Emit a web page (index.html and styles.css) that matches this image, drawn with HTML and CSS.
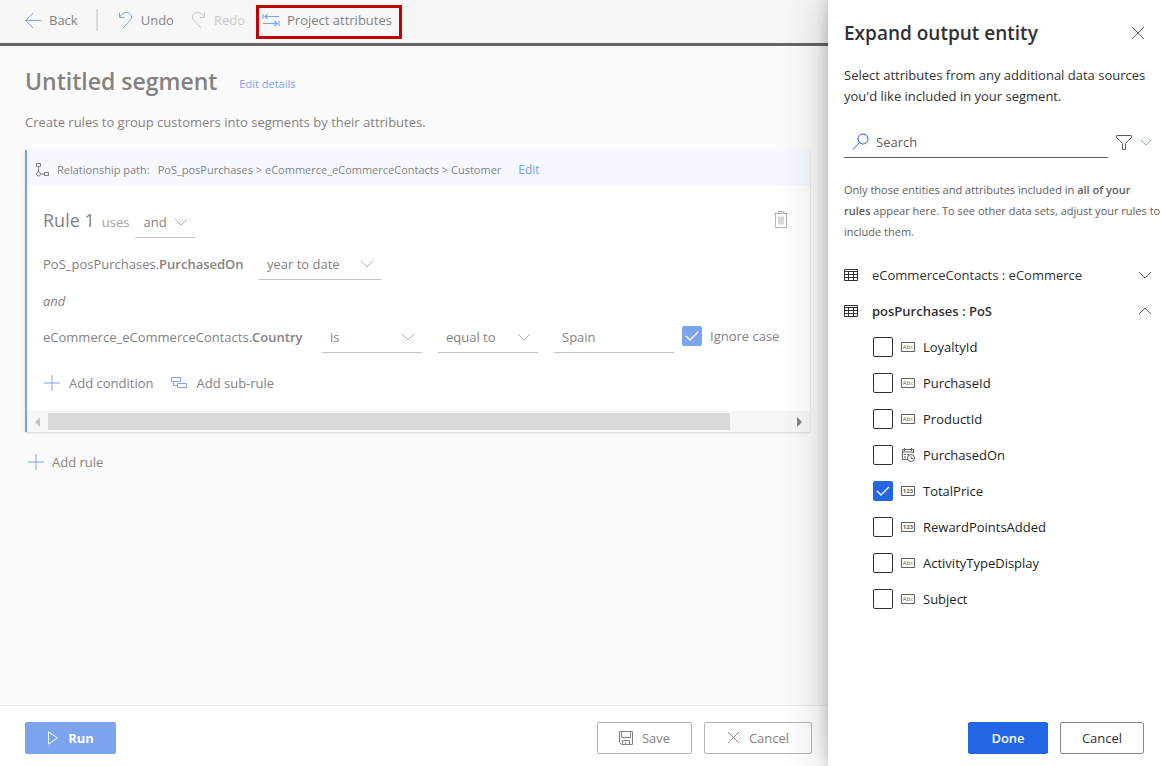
FILE: index.html
```html
<!DOCTYPE html>
<html lang="en">
<head>
<meta charset="utf-8">
<title>Untitled segment</title>
<link rel="stylesheet" href="styles.css">
</head>
<body>
<svg class="defs" aria-hidden="true">
  <symbol id="down" viewBox="0 0 14 8"><path d="M1 1l6 6 6-6"/></symbol>
  <symbol id="plus" viewBox="0 0 16 16"><path d="M8 0v16M0 8h16"/></symbol>
  <symbol id="close" viewBox="0 0 14 14"><path d="M1 1l12 12M13 1L1 13"/></symbol>
  <symbol id="check" viewBox="0 0 20 20"><path d="M4 10l4 4 8-8"/></symbol>
  <symbol id="table" viewBox="0 0 14 12"><path d="M.5.5h13v11H.5zM.5 2.5h13M.5 5.5h13M.5 8.5h13M4.500 2.500v9M9.500 2.500v9"/></symbol>
  <symbol id="date" viewBox="0 0 14 14"><path d="M7 11.500H1.500v-10h11v4M1.500 4h11M3.500 0v3M10.500 0v3M3 6.500h2M6 6.500h2M3 9h2M10 8.500v2h2"/><circle cx="10" cy="10" r="3.500"/></symbol>
</svg>
<div class="app">
  <main class="main">
    <nav class="toolbar">
      <button class="tool"><svg class="blue" width="17" height="16" viewBox="0 0 17 16"><path d="M16.500 8.500H1M8 1L.8 8.500 8 16"/></svg>Back</button>
      <span class="divider"></span>
      <button class="tool undo"><svg class="blue" width="16" height="18" viewBox="0 0 16 18"><path d="M1.500 1.500v5h5M1.500 6C4 3 6 1.500 8.500 1.500c5 0 6.500 5 3.500 8L5 17"/></svg>Undo</button>
      <button class="tool redo" disabled><svg width="16" height="18" viewBox="0 0 16 18"><path d="M13.500 1.500v5h-5M13.500 6C11 3 9 1.500 6.500 1.500c-5 0-6.500 5-3.500 8L10 17"/></svg>Redo</button>
      <button class="tool project"><svg class="blue strong" width="18" height="14" viewBox="0 0 18 14"><path d="M1 1v5M17 8v5M3 3.500h14M1 10.500h14M5.500 1L3 3.500 5.500 6M12.500 8l2.500 2.500-2.500 2.500"/></svg>Project attributes</button>
    </nav>
    <div class="content">
      <header class="heading"><h1>Untitled segment</h1><a href="#">Edit details</a></header>
      <p class="intro">Create rules to group customers into segments by their attributes.</p>
      <section class="card">
        <div class="path">
          <svg width="14" height="14" viewBox="0 0 14 14"><path d="M1.500.5h4v3h-4zM3.500 4v5M9.500 9.500h4v3h-4zM5.500 11h4"/><circle cx="3.500" cy="11" r="2"/></svg>
          <span class="path-label">Relationship path:</span>
          <span class="path-value">PoS_posPurchases &gt; eCommerce_eCommerceContacts &gt; Customer</span>
          <a href="#">Edit</a>
        </div>
        <div class="rule">
          <div class="rule-head">
            <h2>Rule 1</h2><span class="uses">uses</span>
            <span class="field w60"><select aria-label="Rule operator"><option>and</option></select><svg width="14" height="8"><use href="#down"/></svg></span>
            <button class="trash" aria-label="Delete rule"><svg width="14" height="17" viewBox="0 0 14 17"><path d="M0 2.500h14M4.500 2V.5h5V2M1.500 3v13.500h11V3M5 5.500v8M7 5.500v8M9 5.500v8"/></svg></button>
          </div>
          <div class="condition">
            <span class="name w200">PoS_posPurchases.<b>PurchasedOn</b></span>
            <span class="field w122"><select aria-label="PurchasedOn range"><option>year to date</option></select><svg width="14" height="8"><use href="#down"/></svg></span>
          </div>
          <div class="joiner">and</div>
          <div class="condition">
            <span class="name w263">eCommerce_eCommerceContacts.<b>Country</b></span>
            <span class="field w100"><select aria-label="Country test"><option>is</option></select><svg width="14" height="8"><use href="#down"/></svg></span>
            <span class="field w100"><select aria-label="Country comparison"><option>equal to</option></select><svg width="14" height="8"><use href="#down"/></svg></span>
            <span class="field w120"><input type="text" aria-label="Country value" value="Spain"></span>
            <label class="ignore"><span class="box"><input type="checkbox" checked><svg width="20" height="20"><use href="#check"/></svg></span>Ignore case</label>
          </div>
          <div class="actions">
            <button class="tool"><svg class="blue" width="16" height="16"><use href="#plus"/></svg>Add condition</button>
            <button class="tool"><svg class="blue" width="16" height="12" viewBox="0 0 16 12"><path d="M.5.5h9v4h-9zM6.500 6.500h9v4h-9zM2.500 4.500v4h4"/></svg>Add sub-rule</button>
          </div>
        </div>
        <div class="scroll">
          <svg class="arrow dim" width="5" height="10" viewBox="0 0 5 10"><path d="M5 0v10L0 5z"/></svg>
          <div class="track"><div class="thumb"></div></div>
          <svg class="arrow" width="5" height="10" viewBox="0 0 5 10"><path d="M0 0v10l5-5z"/></svg>
        </div>
      </section>
      <button class="tool add-rule"><svg class="blue" width="16" height="16"><use href="#plus"/></svg>Add rule</button>
    </div>
    <footer class="footer">
      <button class="btn run"><svg width="12" height="14" viewBox="0 0 12 14"><path d="M1.500 1v12L10.500 7z"/></svg>Run</button>
      <button class="btn save"><svg width="14" height="14" viewBox="0 0 14 14"><path d="M.5.5h13v13h-11l-2-2zM2.500.5v6h9v-6M3.500 13.500v-4h7v4M6.500 13.500v-2"/></svg>Save</button>
      <button class="btn cancel"><svg width="13" height="13"><use href="#close"/></svg>Cancel</button>
    </footer>
  </main>
  <aside class="panel">
    <header class="panel-head"><h2>Expand output entity</h2><button class="x" aria-label="Close"><svg width="14" height="14"><use href="#close"/></svg></button></header>
    <p class="lead">Select attributes from any additional data sources<br>you'd like included in your segment.</p>
    <div class="search-row">
      <label class="search"><svg width="18" height="18" viewBox="0 0 18 18"><circle cx="11" cy="6" r="5"/><path d="M7.500 9.500L1 16.500"/></svg><input type="text" placeholder="Search" aria-label="Search"></label>
      <button class="filter" aria-label="Filter"><svg width="16" height="15" viewBox="0 0 16 15"><path d="M.5.5h15v2l-6 6v6h-3v-6l-6-6z"/></svg><svg class="teal" width="12" height="7"><use href="#down"/></svg></button>
    </div>
    <p class="note">Only those entities and attributes included in <b>all of your</b><br><b>rules</b> appear here. To see other data sets, adjust your rules to<br>include them.</p>
    <button class="entity"><svg width="14" height="12"><use href="#table"/></svg><span>eCommerceContacts : eCommerce</span><svg class="chev" width="14" height="8"><use href="#down"/></svg></button>
    <button class="entity open"><svg width="14" height="12"><use href="#table"/></svg><span>posPurchases : PoS</span><svg class="chev up" width="14" height="8"><use href="#down"/></svg></button>
    <div class="attributes">
      <label><span class="box"><input type="checkbox"></span><svg class="type" width="14" height="10" viewBox="0 0 14 10"><path d="M.5.5h13v9H.5z"/><text x="7" y="7" text-anchor="middle">Abc</text></svg>LoyaltyId</label>
      <label><span class="box"><input type="checkbox"></span><svg class="type" width="14" height="10" viewBox="0 0 14 10"><path d="M.5.5h13v9H.5z"/><text x="7" y="7" text-anchor="middle">Abc</text></svg>PurchaseId</label>
      <label><span class="box"><input type="checkbox"></span><svg class="type" width="14" height="10" viewBox="0 0 14 10"><path d="M.5.5h13v9H.5z"/><text x="7" y="7" text-anchor="middle">Abc</text></svg>ProductId</label>
      <label><span class="box"><input type="checkbox"></span><svg class="type" width="14" height="14"><use href="#date"/></svg>PurchasedOn</label>
      <label><span class="box"><input type="checkbox" checked><svg width="20" height="20"><use href="#check"/></svg></span><svg class="type" width="14" height="10" viewBox="0 0 14 10"><path d="M.5.5h13v9H.5z"/><text class="bold" x="7" y="7" text-anchor="middle">123</text></svg>TotalPrice</label>
      <label><span class="box"><input type="checkbox"></span><svg class="type" width="14" height="10" viewBox="0 0 14 10"><path d="M.5.5h13v9H.5z"/><text class="bold" x="7" y="7" text-anchor="middle">123</text></svg>RewardPointsAdded</label>
      <label><span class="box"><input type="checkbox"></span><svg class="type" width="14" height="10" viewBox="0 0 14 10"><path d="M.5.5h13v9H.5z"/><text x="7" y="7" text-anchor="middle">Abc</text></svg>ActivityTypeDisplay</label>
      <label><span class="box"><input type="checkbox"></span><svg class="type" width="14" height="10" viewBox="0 0 14 10"><path d="M.5.5h13v9H.5z"/><text x="7" y="7" text-anchor="middle">Abc</text></svg>Subject</label>
    </div>
    <footer class="panel-foot"><button class="btn done">Done</button><button class="btn plain">Cancel</button></footer>
  </aside>
</div>
</body>
</html>
```

FILE: styles.css
```css
* { box-sizing: border-box; }
body, h1, h2, p { margin: 0; }
body {
  font: 13px/20px "Open Sans", "Noto Sans", sans-serif;
  color: #848280;
  background: #fff;
}
.defs { position: absolute; width: 0; height: 0; }
svg { fill: none; stroke: currentColor; flex: none; }
b { font-weight: 600; }
a { color: #7c9ff0; font-size: 12px; text-decoration: none; }
button, input, select { font: inherit; color: inherit; }
button { border: 0; padding: 0; background: none; white-space: nowrap; }
.blue { color: #7ba2ec; }
.strong { stroke-width: 1.2; }

.app {
  display: grid;
  grid-template-columns: minmax(0, 1fr) 333px;
  min-height: 100vh;
  overflow: hidden;
}
.main { display: flex; flex-direction: column; background: #fbfbfb; }

.toolbar {
  display: flex;
  align-items: center;
  height: 46px;
  padding: 0 25px 3px;
  background: #f7f7f7;
  border-bottom: 3px solid #666;
}
.tool { display: flex; align-items: center; gap: 8px; }
.toolbar .tool { gap: 7px; }
.divider { width: 2px; height: 22px; margin: 0 20px 0 18px; background: #dcdad8; }
.redo { margin: 0 11px 0 17px; color: #c9c8c6; }
.toolbar .redo { color: #c9c8c6; }
.project { height: 34px; margin-top: 4px; padding: 0 7px 4px 3px; border: 3px solid #c40006; }

.content { flex: 1; padding: 20px 18px 20px 25px; }
.heading { display: flex; align-items: center; gap: 22px; height: 30px; }
h1 { font-size: 23px; line-height: 30px; font-weight: 600; white-space: nowrap; }
.heading a { padding-top: 6px; font-size: 11px; }
.intro { margin: 16px 0 18px; }

.card {
  background: #fff;
  border-left: 2px solid #7ba0e6;
  box-shadow: 0 1px 2px rgba(0, 0, 0, .16);
}
.path {
  display: flex;
  align-items: center;
  height: 36px;
  padding: 3px 9px 0 8px;
  background: #f5f9ff;
  font-size: 11px;
  white-space: nowrap;
}
.path-label { margin: 0 8px; }
.path a { margin-left: 17px; font-size: 12px; }
.rule { padding: 19px 22px 18px 16px; }
.rule-head { display: flex; align-items: center; height: 34px; }
.rule-head h2 { font-size: 18px; line-height: 24px; font-weight: 400; margin-top: -4px; }
.uses { margin: 0 6px 0 7px; color: #a19f9d; }
.trash { margin-left: auto; color: #b5b3b0; }
.field { display: grid; align-items: center; height: 32px; border-bottom: 1px solid #c4c3c2; }
.field > * { grid-area: 1 / 1; }
.field select, .field input {
  appearance: none;
  width: 100%;
  height: 30px;
  padding: 0 8px;
  border: 0;
  border-radius: 0;
  outline: 0;
  background: none;
}
.field svg { justify-self: end; margin-right: 7px; pointer-events: none; color: #b0aeac; }
.w60 { width: 60px; }
.w100 { width: 100px; }
.w120 { width: 120px; }
.w122 { width: 122px; }
.w200 { width: 200px; }
.w263 { width: 263px; }
.condition { display: flex; align-items: center; gap: 16px; height: 41px; padding-top: 9px; }
.name { white-space: nowrap; }
.joiner { height: 32px; padding-top: 11px; font-style: italic; }
.ignore { display: flex; gap: 8px; margin: -2px 0 0 -8px; align-items: center; white-space: nowrap; }
.box { display: grid; width: 20px; height: 20px; color: #fff; }
.box > * { grid-area: 1 / 1; }
.box input { appearance: none; width: 20px; height: 20px; margin: 0; border: 1px solid #323130; border-radius: 2px; background: #fff; }
.box input:checked { background: #2266e3; border-color: #2266e3; }
.box svg { position: relative; pointer-events: none; stroke-width: 1.3; }
.ignore .box input:checked { background: #7ba3ee; border-color: #7ba3ee; }
.actions { display: flex; gap: 18px; height: 40px; align-items: flex-end; padding-left: 1px; }
.actions .tool { gap: 9px; }

.scroll { display: flex; align-items: center; gap: 8px; height: 21px; padding: 0 8px; background: #f7f7f7; }
.arrow { fill: #858585; stroke: none; }
.dim { fill: #c4c4c4; }
.track { flex: 1; }
.thumb { width: 92%; height: 17px; background: #d9d9d9; }
.add-rule { margin: 20px 0 0 3px; }

.footer { display: flex; align-items: center; gap: 12px; height: 61px; padding: 3px 16px 0 25px; background: #fff; border-top: 1px solid #eeedec; }
.btn { display: flex; align-items: center; justify-content: center; gap: 9px; height: 32px; border: 1px solid #b5b3b1; border-radius: 2px; font-weight: 600; }
.run { width: 91px; margin-right: auto; background: #7ba3ee; border-color: #7ba3ee; color: #fff; font-weight: 700; }
.save { width: 95px; }
.cancel { width: 108px; }
.save, .cancel { font-weight: 500; }

.panel {
  position: relative;
  display: flex;
  flex-direction: column;
  padding: 21px 17px 12px 16px;
  background: #fff;
  color: #323130;
  box-shadow: 0 0 48px rgba(0, 0, 0, .22), 0 0 14px rgba(0, 0, 0, .2);
}
.panel-head { display: flex; justify-content: space-between; align-items: center; height: 24px; }
.panel-head h2 { font-size: 19px; line-height: 24px; font-weight: 600; white-space: nowrap; }
.x { width: 14px; height: 14px; margin-right: -1px; display: grid; color: #605e5c; }
.lead { margin-top: 20px; line-height: 21px; white-space: nowrap; }
.search-row { display: flex; gap: 8px; align-items: center; margin: 19px -8px 0 0; }
.search { display: flex; flex: 1; min-width: 0; align-items: center; gap: 6px; height: 32px; padding-left: 8px; border-bottom: 1px solid #605e5c; }
.search svg { color: #2b5fd9; }
.search input { flex: 1; min-width: 0; padding: 0; border: 0; outline: 0; background: none; }
.search input::placeholder { color: #605e5c; opacity: 1; }
.filter { display: flex; align-items: center; gap: 8px; color: #605e5c; }
.teal { color: #6ba0b4; }
.note { margin: 21px -17px 15px 0; font-size: 11px; line-height: 21px; color: #605e5c; white-space: nowrap; }
.entity { display: flex; align-items: center; gap: 14px; height: 36px; margin-right: -8px; }
.entity.open { font-weight: 600; }
.chev { margin-left: auto; color: #605e5c; }
.up { transform: rotate(180deg); }
.attributes { display: grid; grid-auto-rows: 36px; padding-left: 29px; }
.attributes label { display: flex; align-items: center; gap: 8px; white-space: nowrap; color: #201f1e; }
.type { color: #605e5c; stroke-width: 1; }
.type text { font: 6px "Open Sans", sans-serif; fill: currentColor; stroke: none; }
.type .bold { font-weight: 700; }
.panel-foot { display: flex; justify-content: flex-end; gap: 12px; margin-top: auto; }
.done { width: 80px; background: #2266e3; border-color: #2266e3; color: #fff; }
.plain { width: 84px; border-color: #8a8886; font-weight: 500; }
```
